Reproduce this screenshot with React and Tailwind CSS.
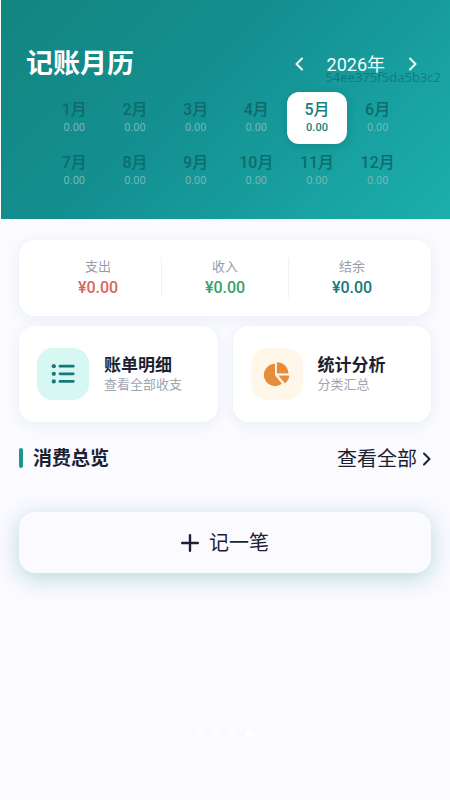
import React from "react";

const months = Array.from({ length: 12 }, (_, i) => i + 1);

const totals = [
  { label: "支出", color: "text-[#d9655d]" },
  { label: "收入", color: "text-[#38a169]" },
  { label: "结余", color: "text-[#16797a]" },
];

function Chevron({ left = false, className = "" }) {
  return (
    <svg viewBox="0 0 8 14" className={className} fill="none" stroke="currentColor" strokeWidth="2" strokeLinecap="round" strokeLinejoin="round" aria-hidden="true">
      <path d={left ? "M7 1.5 1.5 7 7 12.5" : "M1 1.5 6.5 7 1 12.5"} />
    </svg>
  );
}

function ListIcon() {
  return (
    <svg viewBox="0 0 24 20" className="h-5 w-6" fill="#16797a" aria-hidden="true">
      {[2.2, 9.8, 17.4].map((y) => (
        <g key={y}>
          <circle cx="2.8" cy={y} r="2.1" />
          <rect x="7.6" y={y - 1.4} width="16" height="2.8" rx="1.4" />
        </g>
      ))}
    </svg>
  );
}

function PieIcon() {
  return (
    <svg viewBox="0 0 26 26" className="size-[26px]" fill="#e68d3c" aria-hidden="true">
      <path d="M11 2.7V14.2l6.9 8.6A11.2 11.2 0 1 1 11 2.7Z" />
      <path d="M12.9 1.2A11.4 11.4 0 0 1 24.4 12.5H12.9Z" />
      <path d="M14.2 14.6H25.3a11.5 11.5 0 0 1-4.3 8Z" />
    </svg>
  );
}

function ShortcutCard({ title, note, tint, children }) {
  return (
    <button type="button" className="flex h-24 min-w-0 items-center rounded-2xl bg-white px-[18px] text-left shadow-[0_3px_14px_rgba(30,110,130,0.08)]">
      <span className={`flex size-[52px] shrink-0 items-center justify-center rounded-2xl ${tint}`}>{children}</span>
      <span className="mt-0.5 ml-[15px] flex flex-col whitespace-nowrap">
        <span className="text-[17px] leading-5 font-bold text-[#1c1f33]">{title}</span>
        <span className="text-[13px] leading-5 text-[#a0a6b1]">{note}</span>
      </span>
    </button>
  );
}

export default function App() {
  return (
    <div className="min-h-screen bg-[#fafaff] font-[Roboto,'Noto_Sans_CJK_SC',sans-serif] text-[#1c1f33]">
      <header className="relative border-l border-white bg-linear-[135deg,#13857f_0%,#149092_45%,#1bafac_100%] bg-origin-border pt-11 pb-[22px]">
        <div className="flex h-10 items-center justify-between pr-[29px] pl-[25px]">
          <h1 className="text-[27px] leading-10 font-bold text-white">记账月历</h1>
          <div className="flex items-center text-[#f4fffd]">
            <button type="button" aria-label="上一年" className="p-1"><Chevron left className="h-3.5 w-2" /></button>
            <span className="mx-5 pt-px text-lg leading-10">2026年</span>
            <button type="button" aria-label="下一年" className="p-1"><Chevron className="h-3.5 w-2" /></button>
          </div>
        </div>
        <span className="pointer-events-none absolute top-[68px] right-[9px] font-['Noto_Sans',sans-serif] text-[13px] leading-[18px] text-[#0a5055]/45">54ee375f5da5b3c2</span>
        <div className="mt-2 mr-[42px] ml-[43px] grid grid-cols-6 gap-y-px">
          {months.map((m) => {
            const active = m === 5;
            return (
              <button
                key={m}
                type="button"
                aria-pressed={active}
                className={`flex h-[52px] flex-col items-center justify-center rounded-xl ${active ? "bg-white text-[#107f7e] shadow-[0_2px_8px_rgba(0,70,70,0.2)]" : "text-[#0d6c6b]"}`}
              >
                <span className="text-base leading-5 font-medium">{m}月</span>
                <span className={`text-[11px] leading-4 ${active ? "font-medium" : "text-[#72b8b8]"}`}>0.00</span>
              </button>
            );
          })}
        </div>
      </header>

      <main className="px-[19px] pt-[21px]">
        <section className="flex h-[76px] items-center rounded-2xl bg-white shadow-[0_3px_14px_rgba(30,110,130,0.08)]">
          <dl className="flex w-full divide-x divide-[#f1f2f5] px-4">
            {totals.map((t) => (
              <div key={t.label} className="flex-1 text-center">
                <dt className="text-[13px] leading-[18px] text-[#979da8]">{t.label}</dt>
                <dd className={`mt-0.5 text-base leading-5 font-medium ${t.color}`}>¥0.00</dd>
              </div>
            ))}
          </dl>
        </section>

        <div className="mt-2.5 grid grid-cols-2 gap-[15px]">
          <ShortcutCard title="账单明细" note="查看全部收支" tint="bg-[#d6f7f2]"><ListIcon /></ShortcutCard>
          <ShortcutCard title="统计分析" note="分类汇总" tint="bg-[#fff8ea]"><PieIcon /></ShortcutCard>
        </div>

        <div className="mt-5 flex h-8 items-center">
          <span className="h-5 w-1 rounded-full bg-[#1c9690]" />
          <h2 className="ml-2.5 pt-px text-[19px] leading-8 font-bold">消费总览</h2>
          <button type="button" className="ml-auto flex items-center gap-1.5 pt-px text-xl leading-8">
            查看全部
            <Chevron className="h-3.5 w-2" />
          </button>
        </div>

        <button type="button" className="mt-[38px] flex h-[61px] w-full items-center justify-center gap-2.5 rounded-2xl bg-[#fafaff] text-xl shadow-[0_5px_22px_rgba(20,130,130,0.28)]">
          <svg viewBox="0 0 18 18" className="size-[18px]" stroke="currentColor" strokeWidth="2.4" strokeLinecap="round" aria-hidden="true">
            <path d="M9 1.2v15.6M1.2 9h15.6" />
          </svg>
          记一笔
        </button>

        <div className="mt-[156px] flex h-2.5 items-center justify-center gap-2.5" aria-hidden="true">
          <span className="size-1.5 rounded-full bg-white/70" />
          <span className="size-1.5 rounded-full bg-white/70" />
          <span className="size-1.5 rounded-full bg-white/80" />
          <span className="size-2 rounded-full bg-white" />
        </div>
      </main>
    </div>
  );
}
